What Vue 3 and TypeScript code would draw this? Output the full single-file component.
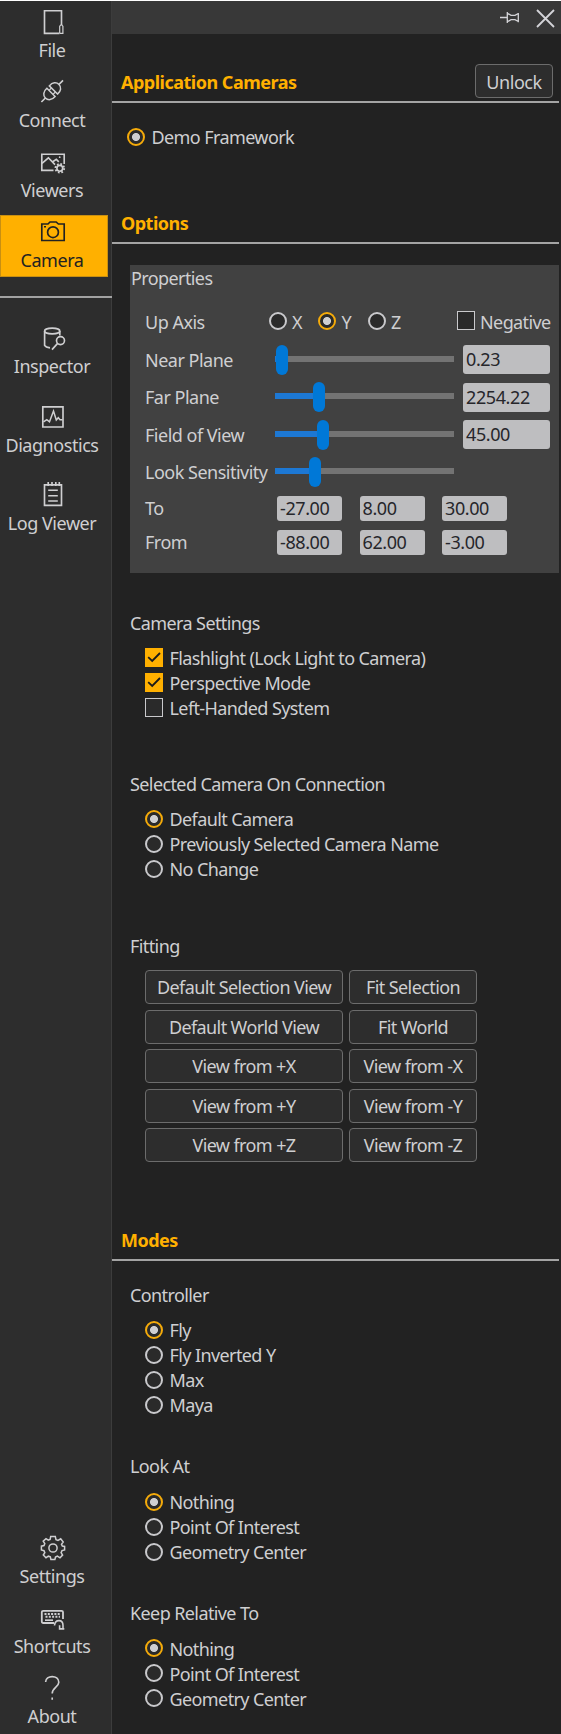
<script setup lang="ts">
import { ref } from 'vue'

interface NavItem { id: string; label: string }
interface Slider { label: string; pos: number; value?: string }
interface Group { title: string; kind: 'radio' | 'check'; cls: string; items: string[]; on: number[] }

const topNav: NavItem[] = [
  { id: 'file', label: 'File' },
  { id: 'connect', label: 'Connect' },
  { id: 'viewers', label: 'Viewers' },
  { id: 'camera', label: 'Camera' },
]
const toolNav: NavItem[] = [
  { id: 'inspector', label: 'Inspector' },
  { id: 'diagnostics', label: 'Diagnostics' },
  { id: 'log', label: 'Log Viewer' },
]
const bottomNav: NavItem[] = [
  { id: 'settings', label: 'Settings' },
  { id: 'shortcuts', label: 'Shortcuts' },
  { id: 'about', label: 'About' },
]
const navs = [
  { cls: 'nav-top', items: topNav },
  { cls: 'nav-tools', items: toolNav },
  { cls: 'nav-bottom', items: bottomNav },
]
const active = ref('camera')

const axes = ['X', 'Y', 'Z']
const axis = ref('Y')
const sliders: Slider[] = [
  { label: 'Near Plane', pos: 7, value: '0.23' },
  { label: 'Far Plane', pos: 44, value: '2254.22' },
  { label: 'Field of View', pos: 48, value: '45.00' },
  { label: 'Look Sensitivity', pos: 40 },
]
const vectors = [
  { label: 'To', values: ['-27.00', '8.00', '30.00'] },
  { label: 'From', values: ['-88.00', '62.00', '-3.00'] },
]
const optionGroups: Group[] = [
  { title: 'Camera Settings', kind: 'check', cls: 'g-settings', items: ['Flashlight (Lock Light to Camera)', 'Perspective Mode', 'Left-Handed System'], on: [0, 1] },
  { title: 'Selected Camera On Connection', kind: 'radio', cls: 'g-selected', items: ['Default Camera', 'Previously Selected Camera Name', 'No Change'], on: [0] },
]
const modeGroups: Group[] = [
  { title: 'Controller', kind: 'radio', cls: 'g-controller', items: ['Fly', 'Fly Inverted Y', 'Max', 'Maya'], on: [0] },
  { title: 'Look At', kind: 'radio', cls: 'g-look', items: ['Nothing', 'Point Of Interest', 'Geometry Center'], on: [0] },
  { title: 'Keep Relative To', kind: 'radio', cls: 'g-keep', items: ['Nothing', 'Point Of Interest', 'Geometry Center'], on: [0] },
]
const fitting = [
  'Default Selection View', 'Fit Selection', 'Default World View', 'Fit World',
  'View from +X', 'View from -X', 'View from +Y', 'View from -Y', 'View from +Z', 'View from -Z',
]
</script>

<template>
  <div class="app">
    <aside class="sidebar">
      <nav v-for="n in navs" :key="n.cls" :class="n.cls">
        <div v-for="it in n.items" :key="it.id" class="nav-item" :class="{ active: it.id === active }">
          <svg class="nav-icon" viewBox="0 0 28 28" width="28" height="28">
            <template v-if="it.id === 'file'">
              <path d="M20.5 25.3H5.5V2.7H22.5V17" />
              <path d="M20.7 25V18.2Q22.3 15.4 23.9 18.2V25.3H20.5" stroke-width="1.2" />
            </template>
            <template v-else-if="it.id === 'connect'">
              <g transform="translate(13.2 13.2) rotate(-45)">
                <path d="M-15.3 0H-9.6M9.6 0H15.3" />
                <path d="M-1.7-5.8C-6.5-6.2-9.6-3.6-9.6 0C-9.6 3.6-6.5 6.2-1.7 5.8ZM1.7-5.8C6.5-6.2 9.6-3.6 9.6 0C9.6 3.6 6.5 6.2 1.7 5.8Z" stroke-width="1.5" />
                <path d="M-1.7-2.8H1.7M-1.7 2.8H1.7" stroke-width="1.2" />
              </g>
            </template>
            <template v-else-if="it.id === 'viewers'">
              <path d="M14.5 22.3H2.8V6.2H25.2V16" />
              <path d="M3 15.4L9.4 9.8L16 16.6M13.4 14L17.3 11.4L19.8 13.8" />
              <circle cx="20.7" cy="9.2" r=".9" fill="currentColor" stroke="none" />
              <circle cx="20.8" cy="20.3" r="2.9" />
              <circle cx="20.8" cy="20.3" r="4.3" stroke-width="2" stroke-dasharray="1.7 1.68" />
            </template>
            <template v-else-if="it.id === 'camera'">
              <path d="M2.8 22.5V6H9L11 4H17.2L19.4 6H25.2V22.5Z" />
              <circle cx="14" cy="14.2" r="5.4" stroke-width="1.7" />
              <path d="M5 8.7H7" />
            </template>
            <template v-else-if="it.id === 'inspector'">
              <ellipse cx="13.2" cy="7" rx="7.6" ry="2.9" />
              <path d="M5.6 7V21.4Q6.8 23.4 11 23.9M20.8 7V11.6M13 25.6L18.4 19.6" />
              <circle cx="21.5" cy="16.6" r="4" />
            </template>
            <template v-else-if="it.id === 'diagnostics'">
              <path d="M3.8 3.8H24V24H3.8Z" />
              <path d="M4.5 18.8L7.8 16.6L10.5 18.8L14.5 8L17.3 17L19.3 14.7L21 16.7H23.6" stroke-width="1.5" />
            </template>
            <template v-else-if="it.id === 'log'">
              <path d="M5.5 3V24.3H22.5V3M5.5 3.9H22.5M9.2 1V5M13 1V5M16.8 1V5M20.3 1V5" />
              <path d="M9.2 9.2H18.8M9.2 14.7H18.8M9.2 20H18.8" />
            </template>
            <template v-else-if="it.id === 'settings'">
              <path d="M11.7 2.5H16.3L17 5.6L19 6.4L21.7 4.8L24.2 8L22.5 10.4L23.3 12.1L25.6 12.4V16L23 16.6L22.1 18.7L23.6 21.1L21 23.8L18.4 22.1L16.5 23L15.9 25.5H11.9L11.3 22.9L9.4 22.2L7 23.7L4.3 21L5.8 18.6L5 16.7L2.4 16V12.2L5 11.6L5.8 9.6L4.2 7.2L7 4.6L9.3 6.2L11.1 5.4Z" stroke-width="1.5" />
              <circle cx="14" cy="14" r="4.1" stroke-width="1.5" />
            </template>
            <template v-else-if="it.id === 'shortcuts'">
              <path d="M15 19H4.3Q2.8 19 2.8 17.5V8Q2.8 6.8 4.3 6.8H22.5Q24 6.8 24 8V15" stroke-width="1.8" />
              <path d="M5.5 10H22M6.5 12.8H21" stroke-width="1.9" stroke-dasharray="2 1.3" />
              <path d="M6 16.2H14" />
              <path d="M15.5 21.5C16 15 24 15 24 21.5V24.6M20.6 21.2V24.9H25.3" stroke-width="1.6" />
            </template>
            <template v-else>
              <path d="M6.6 8C6.6 .8 19.8.6 19.8 8.3C19.8 13 13.2 13.4 13.2 19.6M13.2 23.6V25.8" />
            </template>
          </svg>
          <span class="nav-label">{{ it.label }}</span>
        </div>
      </nav>
    </aside>
    <main class="panel">
      <header class="titlebar">
        <svg class="pin" viewBox="0 0 20 13" width="20" height="13">
          <path d="M0 6.5H7M7.3 1V12M7.3 2.2L11 4.3H15L18.3 2.5M7.3 10.8L11 8.7H15L18.3 10.5M18.3 2V11.2" />
        </svg>
        <svg class="close" viewBox="0 0 19 19" width="19" height="19"><path d="M1 1L18 18M18 1L1 18" /></svg>
      </header>

      <div class="section first">
        <h2>Application Cameras</h2>
        <button class="btn unlock">Unlock</button>
      </div>
      <label class="choice demo"><i class="radio on"></i><span>Demo Framework</span></label>

      <div class="section options"><h2>Options</h2></div>
      <div class="props">
        <div class="props-title">Properties</div>
        <div class="row axis-row">
          <span class="name">Up Axis</span>
          <label v-for="a in axes" :key="a" class="axis"><i class="radio" :class="{ on: a === axis }"></i><span>{{ a }}</span></label>
          <label class="negative"><i class="check"></i><span>Negative</span></label>
        </div>
        <div v-for="s in sliders" :key="s.label" class="row">
          <span class="name">{{ s.label }}</span>
          <div class="slider">
            <div class="fill" :style="{ width: s.pos + 'px' }"></div>
            <div class="thumb" :style="{ left: s.pos - 6 + 'px' }"></div>
          </div>
          <div v-if="s.value" class="field wide">{{ s.value }}</div>
        </div>
        <div v-for="v in vectors" :key="v.label" class="row vec">
          <span class="name">{{ v.label }}</span>
          <div v-for="(x, i) in v.values" :key="i" class="field small">{{ x }}</div>
        </div>
      </div>

      <div v-for="g in optionGroups" :key="g.title" class="group" :class="g.cls">
        <h3>{{ g.title }}</h3>
        <label v-for="(t, i) in g.items" :key="t" class="choice">
          <i :class="[g.kind, { on: g.on.includes(i) }]">
            <svg v-if="g.kind === 'check' && g.on.includes(i)" viewBox="0 0 18 18" width="18" height="18"><path d="M3.2 9.2L7.2 13L15 5" /></svg>
          </i>
          <span>{{ t }}</span>
        </label>
      </div>

      <div class="group g-fitting">
        <h3>Fitting</h3>
        <div class="fit-grid"><button v-for="b in fitting" :key="b" class="btn">{{ b }}</button></div>
      </div>

      <div class="section modes"><h2>Modes</h2></div>
      <div v-for="g in modeGroups" :key="g.title" class="group" :class="g.cls">
        <h3>{{ g.title }}</h3>
        <label v-for="(t, i) in g.items" :key="t" class="choice">
          <i :class="[g.kind, { on: g.on.includes(i) }]"></i><span>{{ t }}</span>
        </label>
      </div>
    </main>
  </div>
</template>

<style>
body { margin: 0; background: #222; }
</style>

<style scoped>
* { box-sizing: border-box; }
.app {
  width: 561px; height: 1734px; display: flex; overflow: hidden;
  border-top: 1px solid #fff; background: #222; color: #cfcfd1;
  font: 18px/24px "Noto Sans", "Open Sans", sans-serif; letter-spacing: -0.6px; white-space: nowrap;
}
.sidebar { width: 112px; flex: none; background: #2d2d2d; border-right: 1px solid #3c3c3c; display: flex; flex-direction: column; }
.nav-top { padding-top: 4px; height: 297px; border-bottom: 2px solid #a2a2a2; display: flex; flex-direction: column; gap: 8px; margin-right: -1px; }
.nav-tools { padding-top: 23px; display: flex; flex-direction: column; gap: 16.5px; }
.nav-bottom { margin-top: auto; padding-bottom: 1px; display: flex; flex-direction: column; gap: 8px; }
.nav-item { height: 62px; width: 108px; padding-top: 3px; display: flex; flex-direction: column; align-items: center; letter-spacing: -0.45px; }
.nav-item.active { background: #ffb000; color: #222; box-shadow: inset 0 0 0 1px #c88f12; }
.nav-icon { flex: none; margin-left: -2px; fill: none; stroke: currentColor; stroke-width: 1.65; }
.nav-label { margin-top: 2px; margin-left: -4px; }
.panel { width: 449px; display: flex; flex-direction: column; }
.titlebar { height: 33px; flex: none; background: #383838; display: flex; }
.titlebar svg { fill: none; stroke: #d4d4d8; }
.pin { margin: 10px 0 0 388px; stroke-width: 1.3; }
.close { margin: 8px 0 0 16px; stroke-width: 1.8; }
.section { width: 447px; flex: none; display: flex; justify-content: space-between; border-bottom: 2px solid #a4a4a4; padding-left: 9px; }
h2, h3 { margin: 0; font-size: 18px; line-height: 24px; }
h2 { color: #ffb000; font-weight: 700; letter-spacing: -0.5px; }
h3 { font-weight: 400; height: 35px; }
.first { height: 69px; padding-top: 30px; padding-right: 6px; }
.first h2 { margin-top: 6px; }
.btn { font: inherit; letter-spacing: inherit; color: inherit; background: #2d2d2d; border: 1px solid #6c6c6c; border-radius: 4px; padding: 0; height: 34px; }
.unlock { width: 78px; letter-spacing: -0.45px; padding-top: 1px; }
.choice { display: flex; height: 25px; padding-left: 15px; }
.choice span { margin-left: 6.5px; }
.radio, .check { width: 18px; height: 18px; flex: none; background: #2a2a2a; border: 1.5px solid #c9c9cc; display: block; }
.radio { border-radius: 50%; margin-top: 2.5px; border-width: 2px; }
.radio.on { border-color: #f5ab0a; background: radial-gradient(circle, #cfcfd1 0 3.6px, #2a2a2a 4.4px); }
.check { margin-top: 2px; height: 19px; }
.check.on { background: #ffb000; border: 0; }
.check svg { display: block; fill: none; stroke: #1a1a1a; stroke-width: 1.8; }
.demo { margin-top: 22px; flex: none; }
.options { margin-top: 60px; height: 34px; padding-top: 1px; }
.props { margin: 21px 0 0 18px; width: 429px; height: 308px; flex: none; background: #414141; padding-top: 1px; }
.props-title { height: 36px; padding-left: 1px; }
.row { height: 37.5px; display: flex; align-items: center; padding-left: 15px; }
.name { width: 130px; flex: none; letter-spacing: -0.5px; }
.axis-row { height: 39px; }
.axis-row .radio, .axis-row .check { margin: 0 0 2px; }
.axis { width: 49.5px; display: flex; align-items: center; margin-left: -6.5px; margin-right: 6.5px; }
.axis span, .negative span { margin-left: 5.5px; }
.negative { display: flex; align-items: center; margin-left: 33px; }
.slider { width: 179px; height: 6px; background: #737373; position: relative; margin-bottom: 2px; }
.fill { height: 6px; background: #1d78d4; }
.thumb { position: absolute; top: -11px; width: 12px; height: 30px; border-radius: 6px; background: #0078d7; }
.field { background: #bebec0; color: #26262b; border-radius: 3px; padding-left: 3px; overflow: hidden; letter-spacing: -0.4px; }
.wide { width: 87px; height: 29px; line-height: 29px; margin-left: 9px; }
.vec { height: 34px; }
.small { width: 65px; height: 25px; line-height: 25px; margin-left: 2px; margin-right: 15.5px; }
.group { padding-left: 18px; flex: none; }
.g-settings { margin-top: 38px; height: 161px; }
.g-selected { height: 162px; }
.g-fitting { height: 294px; }
.fit-grid { margin-left: 15px; display: grid; grid-template-columns: 198px 128px; column-gap: 6px; row-gap: 5.5px; padding-top: 1px; }
.modes { height: 33px; }
.g-controller { margin-top: 22px; height: 171px; }
.g-look { height: 146.5px; }
.g-look h3, .g-keep h3 { height: 36px; }
</style>
